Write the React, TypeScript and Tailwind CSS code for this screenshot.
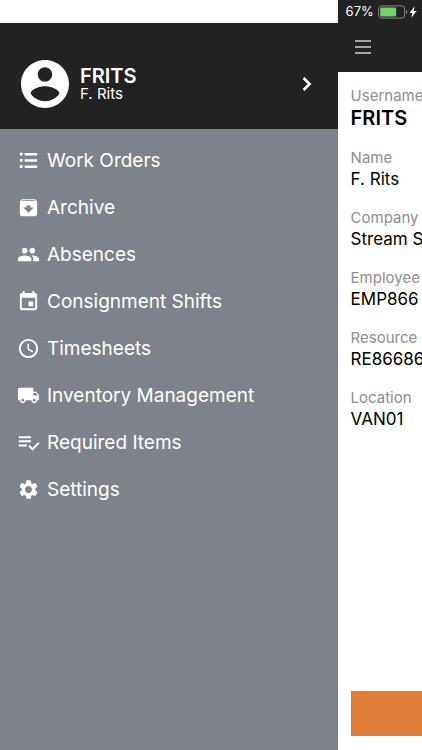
import React from "react";
import {
  MdAccessTime,
  MdArchive,
  MdEvent,
  MdLocalShipping,
  MdPeople,
  MdSettings,
} from "react-icons/md";

interface IconProps {
  size?: number;
  className?: string;
}

interface MenuItem {
  label: string;
  icon: React.ComponentType<IconProps>;
}

interface Field {
  label: string;
  value: string;
  strong?: boolean;
}

const ListIcon = ({ size = 24, className }: IconProps) => (
  <svg viewBox="0 0 24 24" width={size} height={size} className={className} aria-hidden="true">
    <path
      d="M3 4h2.8v2.800H3zM3 10.500h2.800v2.800H3zM3 17h2.800v2.800H3zM8 4.100h13v2.600H8zM8 10.600h13v2.600H8zM8 17.100h13v2.600H8z"
      fill="currentColor"
    />
  </svg>
);

const CheckListIcon = ({ size = 24, className }: IconProps) => (
  <svg viewBox="0 0 24 24" width={size} height={size} className={className} aria-hidden="true">
    <path
      d="M1.800 6.500h12.700M1.800 10.800h12.700M1.800 15.100h8.400M12.500 15.300l3.700 3.700 6.600-6.600"
      fill="none"
      stroke="currentColor"
      strokeWidth="2.100"
    />
  </svg>
);

const MENU_ITEMS: MenuItem[] = [
  { label: "Work Orders", icon: ListIcon },
  { label: "Archive", icon: MdArchive },
  { label: "Absences", icon: MdPeople },
  { label: "Consignment Shifts", icon: MdEvent },
  { label: "Timesheets", icon: MdAccessTime },
  { label: "Inventory Management", icon: MdLocalShipping },
  { label: "Required Items", icon: CheckListIcon },
  { label: "Settings", icon: MdSettings },
];

const FIELDS: Field[] = [
  { label: "Username", value: "FRITS", strong: true },
  { label: "Name", value: "F. Rits" },
  { label: "Company", value: "Stream S" },
  { label: "Employee", value: "EMP866" },
  { label: "Resource", value: "RE86686" },
  { label: "Location", value: "VAN01" },
];

const Avatar = () => (
  <svg viewBox="2 2 20 20" className="size-12 shrink-0 fill-white" aria-hidden="true">
    <path d="M12 2C6.48 2 2 6.48 2 12s4.48 10 10 10 10-4.48 10-10S17.52 2 12 2zm0 3c1.66 0 3 1.34 3 3s-1.34 3-3 3-3-1.34-3-3 1.34-3 3-3zm0 14.2c-2.5 0-4.71-1.28-6-3.22.03-1.99 4-3.08 6-3.08 1.99 0 5.97 1.09 6 3.08-1.29 1.94-3.5 3.22-6 3.22z" />
  </svg>
);

const Chevron = () => (
  <svg viewBox="0 0 10 16" className="h-4 w-[10px] shrink-0" aria-hidden="true">
    <path d="M1.600 2l6 6-6 6" fill="none" stroke="currentColor" strokeWidth="2.600" />
  </svg>
);

const Battery = () => (
  <svg viewBox="0 0 30 14" className="h-[14px] w-[30px] shrink-0" aria-hidden="true">
    <rect x="0.6" y="0.9" width="26" height="12.2" rx="3" fill="none" stroke="#8a8a8a" strokeWidth="1" />
    <rect x="2.2" y="2.5" width="16" height="9" rx="1.4" fill="#72d36b" />
    <path d="M28 5v4c.8-.3 1.3-1.100 1.300-2S28.800 5.300 28 5z" fill="#8a8a8a" />
  </svg>
);

const Bolt = () => (
  <svg viewBox="0 0 8 12" className="h-3 w-2 shrink-0 fill-white" aria-hidden="true">
    <path d="M5.600.3L.5 6.900h2.800L2.300 11.700 7.600 4.900H4.700z" />
  </svg>
);

const SideMenu = () => (
  <aside className="flex w-4/5 shrink-0 flex-col bg-[#7e828b]">
    <div className="h-[23px] bg-white" />
    <button
      type="button"
      className="flex h-[106px] items-center gap-[11px] bg-[#222222] pt-4 pr-[26px] pl-[21px] text-left text-white"
    >
      <Avatar />
      <span className="flex flex-1 flex-col">
        <span className="text-[20px] leading-5 font-semibold">FRITS</span>
        <span className="text-[15px] leading-4">F. Rits</span>
      </span>
      <Chevron />
    </button>
    <nav className="flex flex-col pt-[9px]">
      {MENU_ITEMS.map(({ label, icon: Icon }) => (
        <a
          key={label}
          href="#"
          className="flex h-[47px] items-center gap-[7px] pl-[17px] text-[19px] text-white"
        >
          <Icon size={23} className="mb-[2px] shrink-0" />
          {label}
        </a>
      ))}
    </nav>
  </aside>
);

const ProfilePage = () => (
  <main className="flex min-w-0 flex-1 flex-col overflow-hidden bg-white whitespace-nowrap">
    <header className="bg-[#222222] text-white">
      <div className="flex h-6 items-center pl-2 text-[13px]">
        <span className="pr-1">67%</span>
        <Battery />
        <span className="pl-[1px]">
          <Bolt />
        </span>
      </div>
      <div className="flex h-12 items-center pb-[2px] pl-[17px]">
        <button type="button" aria-label="Menu">
          <svg viewBox="0 0 16 14" className="h-[14px] w-4" aria-hidden="true">
            <path d="M0 1h16M0 7h16M0 13h16" stroke="#d4d4d4" strokeWidth="1.300" />
          </svg>
        </button>
      </div>
    </header>
    <dl className="flex flex-col gap-[18px] pt-[14px] pl-[13px]">
      {FIELDS.map(({ label, value, strong }) => (
        <div key={label}>
          <dt className="text-[15px] leading-5 text-[#8e8e8e]">{label}</dt>
          {strong ? (
            <dd className="text-[20px] leading-6 font-semibold text-black">{value}</dd>
          ) : (
            <dd className="text-[17px] leading-[22px] text-black">{value}</dd>
          )}
        </div>
      ))}
    </dl>
    <div className="mt-auto pb-[14px] pl-[13px]">
      <button type="button" aria-label="Save" className="block h-[45px] w-full bg-[#de7c39]" />
    </div>
  </main>
);

export default function App() {
  return (
    <div className="flex min-h-screen font-[Inter,Roboto,sans-serif]">
      <SideMenu />
      <ProfilePage />
    </div>
  );
}
